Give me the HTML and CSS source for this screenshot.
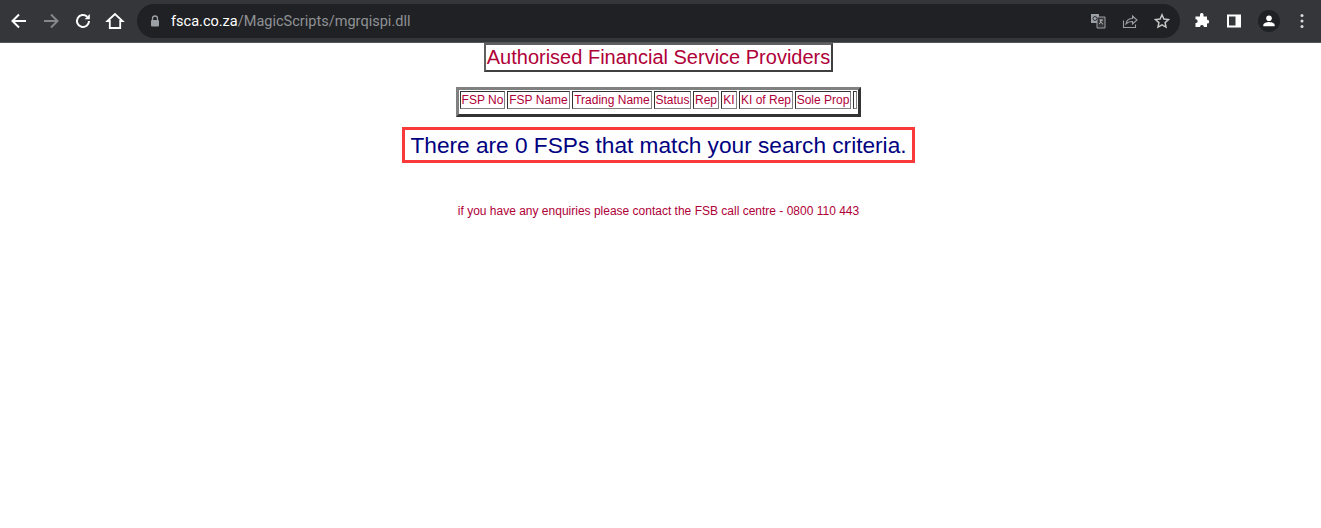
FILE: index.html
```html
<!DOCTYPE html>
<html lang="en">
<head>
<meta charset="utf-8">
<title>Authorised Financial Service Providers</title>
<link rel="stylesheet" href="styles.css">
</head>
<body>
<header class="toolbar">
  <nav class="nav">
    <svg class="icon" viewBox="0 0 20 20"><path d="M17 10H4M10 3.500 3.500 10l6.500 6.500" class="st-white"/></svg>
    <svg class="icon" viewBox="0 0 20 20"><path d="M3 10h13M10 3.500l6.500 6.500-6.500 6.500" class="st-grey"/></svg>
    <svg class="icon" viewBox="0 0 20 20"><path d="M16 10a6 6 0 1 1-1.800-4.300" class="st-white"/><path d="M16.800 3v5.200h-5.200z" class="fill-white"/></svg>
    <svg class="icon" viewBox="0 0 20 20"><path d="M2.500 10 10 3l7.500 7h-2.300v7H4.800v-7z" class="st-white thin"/></svg>
  </nav>
  <div class="omnibox">
    <svg class="lock" viewBox="0 0 10 12"><path d="M2.500 5V3.500a2.500 2.500 0 0 1 5 0V5" class="st-lock"/><rect x="1" y="5" width="8" height="6.500" rx="1" class="fill-lock"/></svg>
    <span class="url"><span class="host">fsca.co.za</span>/MagicScripts/mgrqispi.dll</span>
    <div class="omni-actions">
      <svg class="icon-sm" viewBox="0 0 16 16"><rect x="1" y="1" width="8" height="9" fill="#9aa0a6"/><path d="M7 4h8v11H7z" fill="#35363a" stroke="#9aa0a6"/><path d="M9.500 7h3.500M11 7c0 2-1 3.500-2 4M10.500 8.500c.5 1.200 1.500 2.200 2.500 2.700" stroke="#c4c7c5" fill="none"/><circle cx="5" cy="5.500" r="2" fill="none" stroke="#35363a"/></svg>
      <svg class="icon-sm" viewBox="0 0 16 16"><path d="M1.500 7.500v7h12v-3" class="st-omni"/><path d="M4 11c.5-3.500 3-5.500 6.500-5.500V3l4.500 4-4.500 4V8.500C8 8.500 5.500 9.300 4 11z" class="st-omni"/></svg>
      <svg class="icon-sm" viewBox="0 0 16 16"><path d="m8 1.800 1.900 4.200 4.600.5-3.400 3.100.9 4.500L8 11.800l-4 2.300.9-4.500L1.500 6.500 6.100 6z" class="st-star"/></svg>
    </div>
  </div>
  <div class="extras">
    <svg class="icon-sm" viewBox="0 0 16 16"><path d="M6 1.500a1.800 1.800 0 0 1 3.500 0V3.500h3.500v3.300h.3a1.900 1.900 0 0 1 0 3.800H13V14H9.800v-.5a1.900 1.900 0 0 0-3.700 0v.5H1.500v-4h.7a1.900 1.900 0 0 0 0-3.700h-.7V3.500H6z" class="fill-white"/></svg>
    <svg class="icon-sm" viewBox="0 0 16 16"><path d="M1 1.500h14v13H1zM3 3.500v9h6.500v-9z" class="fill-white" fill-rule="evenodd"/></svg>
    <span class="avatar"><svg class="avatar-icon" viewBox="0 0 16 16"><circle cx="8" cy="4.800" r="3.200" class="fill-white"/><path d="M1.500 14v-1.500c0-2.300 4-3.500 6.500-3.500s6.500 1.200 6.500 3.500V14z" class="fill-white"/></svg></span>
    <svg class="menu" viewBox="0 0 4 16"><circle cx="2" cy="2.500" r="1.500" class="fill-menu"/><circle cx="2" cy="8" r="1.500" class="fill-menu"/><circle cx="2" cy="13.500" r="1.500" class="fill-menu"/></svg>
  </div>
</header>
<main class="page">
  <div class="title">Authorised Financial Service Providers</div>
  <div class="results">
    <span class="cell fsp-no">FSP No</span>
    <span class="cell fsp-name">FSP Name</span>
    <span class="cell trading">Trading Name</span>
    <span class="cell status">Status</span>
    <span class="cell rep">Rep</span>
    <span class="cell ki">KI</span>
    <span class="cell ki-rep">KI of Rep</span>
    <span class="cell sole">Sole Prop</span>
    <span class="cell empty"></span>
  </div>
  <div class="notice">There are 0 FSPs that match your search criteria.</div>
  <p class="contact">if you have any enquiries please contact the FSB call centre - 0800 110 443</p>
</main>
</body>
</html>
```
FILE: styles.css
```css
* { box-sizing: border-box; }
html, body { margin: 0; padding: 0; background: #fff; }
body { font-family: "Liberation Sans", Arial, sans-serif; height: 528px; overflow: hidden; }

.toolbar { height: 43px; display: flex; align-items: center; background: #35363a; border-bottom: 1px solid #55565a; padding-left: 3px; }
.nav { display: flex; width: 134px; align-items: center; }
.icon { width: 20px; height: 20px; margin: 0 6px; flex: none; }
.st-white { fill: none; stroke: #fff; stroke-width: 2; }
.st-white.thin { stroke-width: 1.800; }
.st-grey { fill: none; stroke: #85878a; stroke-width: 2; }
.fill-white { fill: #fff; }
.omnibox { width: 1043px; height: 34px; border-radius: 17px; background: #202124; display: flex; align-items: center; padding: 0 10px 0 13px; flex: none; }
.lock { width: 10px; height: 12px; margin-right: 11px; flex: none; }
.st-lock { fill: none; stroke: #9aa0a6; stroke-width: 1.300; }
.fill-lock { fill: #9aa0a6; }
.url { font-family: "Roboto", sans-serif; font-size: 14.540px; color: #8f9296; white-space: nowrap; }
.host { color: #fff; }
.omni-actions { margin-left: auto; display: flex; gap: 16px; align-items: center; }
.icon-sm { width: 16px; height: 16px; flex: none; }
.st-omni { fill: none; stroke: #9aa0a6; stroke-width: 1.100; }
.st-star { fill: none; stroke: #c4c7c5; stroke-width: 1.500; }
.extras { display: flex; align-items: center; margin-left: 14px; }
.extras .icon-sm { margin-right: 16px; }
.avatar { width: 22px; height: 22px; border-radius: 50%; background: #202124; display: flex; align-items: center; justify-content: center; }
.avatar-icon { width: 14px; height: 14px; }
.menu { width: 4px; height: 16px; margin-left: 20px; }
.fill-menu { fill: #dadce0; }

.page { display: flex; flex-direction: column; align-items: center; padding-right: 4px; }
.title { width: 349px; height: 29px; border: 2px solid; border-color: #606060 #404040 #404040 #606060; color: #b00038; font-size: 20px; line-height: 24px; text-align: center; white-space: nowrap; }
.results { display: flex; gap: 2px; margin-top: 15px; height: 30px; border: 3px solid; border-color: #808080 #333 #333 #808080; padding: 1px 1px 5px; color: #b00038; font-size: 12px; }
.cell { border: 1px solid; border-color: #333 #808080 #808080 #333; height: 18px; line-height: 17px; text-align: center; white-space: nowrap; }
.fsp-no { width: 45px; }
.fsp-name { width: 63px; }
.trading { width: 80px; }
.status { width: 37px; }
.rep { width: 26px; }
.ki { width: 16px; }
.ki-rep { width: 54px; }
.sole { width: 56px; }
.empty { width: 4px; }
.notice { margin-top: 10px; width: 513px; height: 36px; border: 3px solid #f93a3a; color: #000080; font-size: 22.670px; line-height: 30px; text-align: center; white-space: nowrap; }
.contact { margin: 41px 0 0; font-size: 12px; line-height: 15px; color: #b00038; white-space: nowrap; }
```
